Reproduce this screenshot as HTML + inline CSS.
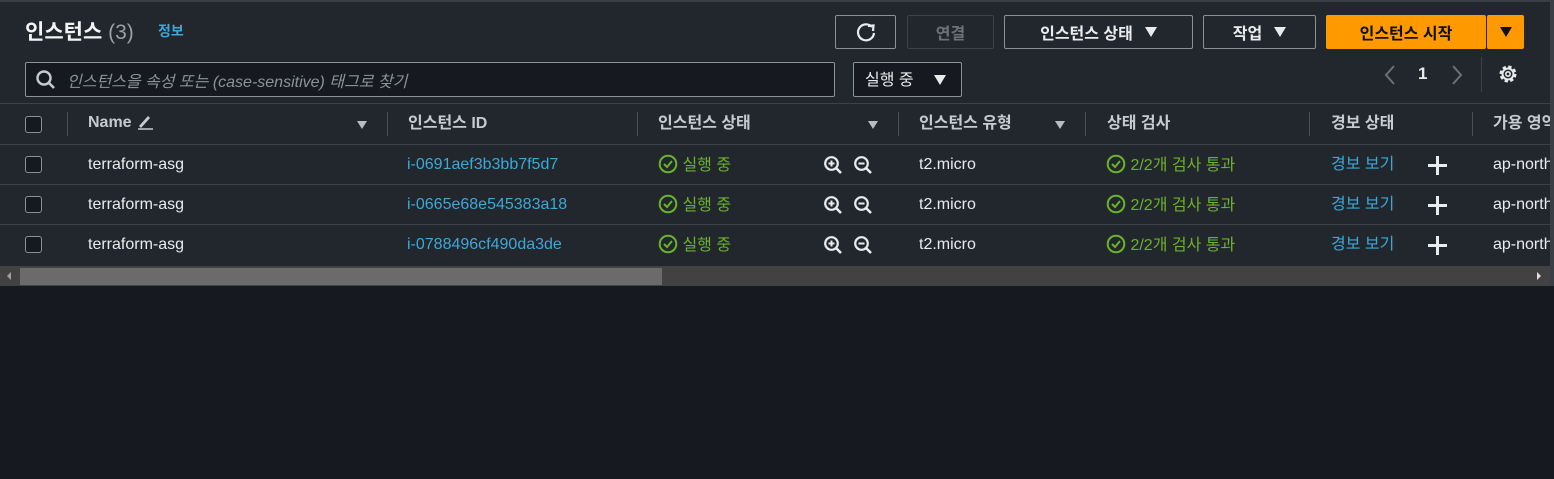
<!DOCTYPE html>
<html><head><meta charset="utf-8"><style>
*{box-sizing:border-box;margin:0;padding:0}
body{width:1554px;height:479px;background:#161a20;overflow:hidden;font-family:"Liberation Sans","Noto Sans CJK KR",sans-serif;position:relative;color:#d1d5db}
.panel{position:absolute;left:0;top:0;width:1554px;height:286px;background:#22262d;border-top:2px solid #3a3f46;overflow:hidden}
.a{position:absolute;white-space:nowrap}
.btn{position:absolute;height:34px;top:13px;border:1px solid #8a9199;border-radius:2px;color:#e9ebed;font-size:16px;font-weight:bold;display:flex;align-items:center;justify-content:center;gap:12px}
.tri{width:0;height:0;border-left:6px solid transparent;border-right:6px solid transparent;border-top:10px solid #e9ebed;display:inline-block}
.hl{position:absolute;left:0;width:1554px;height:1px;background:#3d4249}
.vs{position:absolute;width:1px;height:24px;top:110px;background:#4b5058}
.cb{position:absolute;left:25px;width:17px;height:17px;border:1.5px solid #8a9199;border-radius:3px;background:#161a20}
.th{position:absolute;top:107px;font-size:16px;font-weight:bold;color:#c6cbd1;white-space:nowrap}
.td{position:absolute;font-size:16px;color:#e9ebed;white-space:nowrap}
.link{color:#3ea8d8}
.ok{color:#6bb32b}
.ft{position:absolute;width:0;height:0;border-left:5px solid transparent;border-right:5px solid transparent;border-top:8px solid #b8bdc3;top:119px}
</style></head><body>
<div class="panel">
<div class="a" style="left:25px;top:14px;font-size:21px;font-weight:bold;color:#f2f3f3">인스턴스 <span style="font-weight:normal;color:#9aa0a6">(3)</span></div>
<div class="a link" style="left:158px;top:19px;font-size:14px;font-weight:bold">정보</div>

<div class="btn" style="left:835px;width:61px"><svg width="22" height="22" viewBox="0 0 22 22"><path d="M17 6 A8 8 0 1 0 19 12" fill="none" stroke="#e9ebed" stroke-width="2.2"/><path d="M13 5 L18.5 4.5 L18 10" fill="none" stroke="#e9ebed" stroke-width="2.2"/></svg></div>
<div class="btn" style="left:907px;width:87px;border-color:#3d4249;color:#6b7178">연결</div>
<div class="btn" style="left:1004px;width:189px">인스턴스 상태 <span class="tri"></span></div>
<div class="btn" style="left:1203px;width:113px">작업 <span class="tri"></span></div>
<div class="btn" style="left:1326px;width:160px;background:#ff9900;border-color:#ff9900;color:#0f1111">인스턴스 시작</div>
<div class="btn" style="left:1487px;width:37px;background:#ff9900;border-color:#ff9900"><span class="tri" style="border-top-color:#0f1111"></span></div>

<div class="a" style="left:25px;top:60px;width:810px;height:35px;border:1px solid #8a9199;border-radius:2px;background:#161a20"></div>
<svg class="a" style="left:35px;top:67px" width="22" height="22" viewBox="0 0 22 22"><circle cx="9" cy="9" r="6.5" fill="none" stroke="#c6cbd1" stroke-width="2.4"/><path d="M13.5 13.5 L19 19" stroke="#c6cbd1" stroke-width="2.6"/></svg>
<div class="a" style="left:67px;top:66px;font-size:16px;font-style:italic;color:#8d9299">인스턴스을 속성 또는 (case-sensitive) 태그로 찾기</div>
<div class="a" style="left:853px;top:60px;width:109px;height:35px;border:1px solid #8a9199;border-radius:2px;background:#161a20"></div>
<div class="a" style="left:865px;top:64px;font-size:16px;color:#e9ebed">실행 중</div>
<span class="a tri" style="left:934px;top:73px"></span>

<svg class="a" style="left:1383px;top:62px" width="14" height="22" viewBox="0 0 14 22"><path d="M11 2 L3 11 L11 20" fill="none" stroke="#6b7178" stroke-width="2"/></svg>
<div class="a" style="left:1418px;top:62px;font-size:17px;font-weight:bold;color:#e9ebed">1</div>
<svg class="a" style="left:1450px;top:62px" width="14" height="22" viewBox="0 0 14 22"><path d="M3 2 L11 11 L3 20" fill="none" stroke="#6b7178" stroke-width="2"/></svg>
<div class="a" style="left:1481px;top:55px;width:1px;height:35px;background:#3d4249"></div>
<svg class="a" style="left:1497px;top:61px" width="22" height="22" viewBox="0 0 22 22"><circle cx="11" cy="11" r="7" fill="none" stroke="#e9ebed" stroke-width="3" stroke-dasharray="3.2 2.3"/><circle cx="11" cy="11" r="5.5" fill="none" stroke="#e9ebed" stroke-width="2"/><circle cx="11" cy="11" r="2.2" fill="none" stroke="#e9ebed" stroke-width="1.6"/></svg>

<div class="hl" style="top:101px"></div>
<div class="cb" style="top:114px"></div>
<div class="vs" style="left:67px"></div>
<div class="th" style="left:88px;top:110px">Name <svg width="18" height="18" viewBox="0 0 18 18" style="vertical-align:-3px"><path d="M3 14 L12 4 L14 6 L5 16 Z" fill="#c6cbd1"/><path d="M2 17 H17" stroke="#c6cbd1" stroke-width="1.5"/></svg></div>
<div class="ft" style="left:357px"></div>
<div class="vs" style="left:387px"></div>
<div class="th" style="left:408px">인스턴스 ID</div>
<div class="vs" style="left:637px"></div>
<div class="th" style="left:658px">인스턴스 상태</div>
<div class="ft" style="left:868px"></div>
<div class="vs" style="left:898px"></div>
<div class="th" style="left:919px">인스턴스 유형</div>
<div class="ft" style="left:1055px"></div>
<div class="vs" style="left:1085px"></div>
<div class="th" style="left:1107px">상태 검사</div>
<div class="vs" style="left:1309px"></div>
<div class="th" style="left:1331px">경보 상태</div>
<div class="vs" style="left:1472px"></div>
<div class="th" style="left:1493px">가용 영역</div>
<div class="hl" style="top:142px"></div>

<div id="rows"></div>
<div class="hl" style="top:182px"></div>
<div class="hl" style="top:222px"></div>

<div class="a" style="left:0;top:264px;width:1554px;height:21px;background:#424242"></div>
<div class="a" style="left:20px;top:266px;width:642px;height:17px;background:#6b6b6b"></div>
<div class="a" style="left:7px;top:270px;width:0;height:0;border-top:4px solid transparent;border-bottom:4px solid transparent;border-right:4px solid #a0a0a0"></div>
<div class="a" style="left:1537px;top:270px;width:0;height:0;border-top:4px solid transparent;border-bottom:4px solid transparent;border-left:4px solid #e0e0e0"></div>
<div class="a" style="left:1550px;top:0;width:4px;height:286px;background:#3a3f46"></div>
</div>

<script>
var ids=["i-0691aef3b3bb7f5d7","i-0665e68e545383a18","i-0788496cf490da3de"];
var h="";
var chk='<svg width="20" height="20" viewBox="0 0 20 20" style="vertical-align:-4px"><circle cx="10" cy="10" r="8.3" fill="none" stroke="#6bb32b" stroke-width="2"/><path d="M6 10 L9 13 L14 7" fill="none" stroke="#6bb32b" stroke-width="2"/></svg>';
function zoom(p){return '<svg width="20" height="20" viewBox="0 0 20 20"><circle cx="8.5" cy="8.5" r="6.3" fill="none" stroke="#e9ebed" stroke-width="2.2"/><path d="M13 13 L18 18" stroke="#e9ebed" stroke-width="2.6"/><path d="M5.5 8.5 H11.5'+(p?' M8.5 5.5 V11.5':'')+'" stroke="#e9ebed" stroke-width="2"/></svg>';}
for(var i=0;i<3;i++){var t=143+i*40;
h+='<div class="cb" style="top:'+(t+11)+'px"></div>';
h+='<div class="td" style="left:88px;top:'+(t+11)+'px">terraform-asg</div>';
h+='<div class="td link" style="left:407px;top:'+(t+11)+'px">'+ids[i]+'</div>';
h+='<div class="td ok" style="left:658px;top:'+(t+6)+'px">'+chk+' 실행 중</div>';
h+='<div class="a" style="left:823px;top:'+(t+10)+'px">'+zoom(1)+'</div><div class="a" style="left:853px;top:'+(t+10)+'px">'+zoom(0)+'</div>';
h+='<div class="td" style="left:919px;top:'+(t+11)+'px">t2.micro</div>';
h+='<div class="td ok" style="left:1106px;top:'+(t+6)+'px">'+chk+' 2/2개 검사 통과</div>';
h+='<div class="td link" style="left:1331px;top:'+(t+5)+'px">경보 보기</div>';
h+='<div class="a" style="left:1428px;top:'+(t+11)+'px;width:19px;height:19px"><div class="a" style="left:8px;top:0;width:2.5px;height:19px;background:#e9ebed"></div><div class="a" style="left:0;top:8px;width:19px;height:2.5px;background:#e9ebed"></div></div>';
h+='<div class="td" style="left:1493px;top:'+(t+11)+'px">ap-northeast-2a</div>';}
document.getElementById('rows').outerHTML=h;
</script>
</body></html>
